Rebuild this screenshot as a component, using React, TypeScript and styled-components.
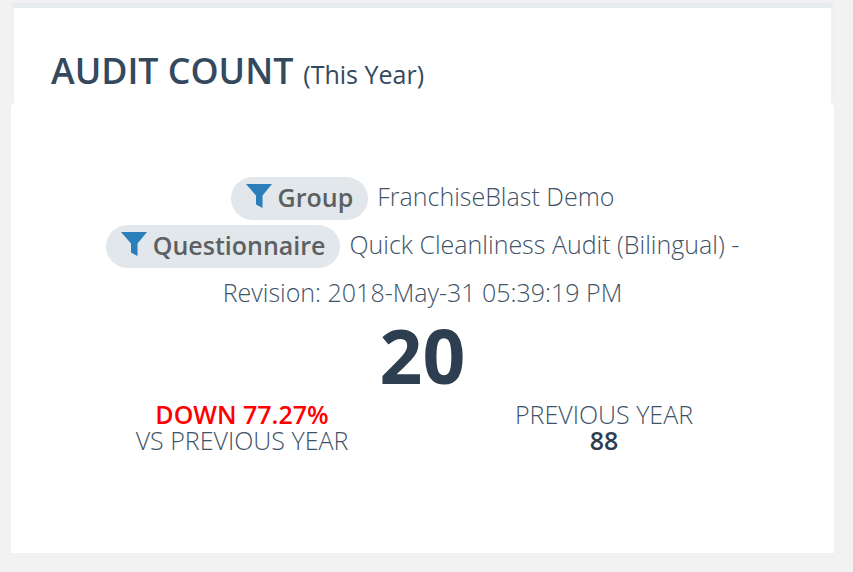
import React from "react";
import styled, { createGlobalStyle } from "styled-components";

const Global = createGlobalStyle`
  html, body { margin: 0; padding: 0; background: #f2f2f2; }
  body { font-family: "Open Sans", "Liberation Sans", sans-serif; }
`;
const Page = styled.div`
  width: 853px;
  height: 572px;
  box-sizing: border-box;
  padding: 3px 19px 0 11px;
  overflow: hidden;
`;
const Header = styled.header`
  height: 99px;
  box-sizing: border-box;
  background: #fff;
  border-top: 5px solid #e7ecef;
  border-left: 3px solid #f0f0f0;
  border-right: 3px solid #f0f0f0;
  padding: 38px 37px 0;
  display: flex;
  align-items: baseline;
  gap: 10px;
  color: #2c3e50;
`;
const Title = styled.h1`
  margin: 0;
  font-size: 35.75px;
  line-height: 48px;
  font-weight: 600;
  color: #34495e;
`;
const Sub = styled.span`
  font-size: 25px;
  font-weight: 400;
  color: #34495e;
`;
const Body = styled.section`
  height: 451px;
  box-sizing: border-box;
  background: #fff;
  border-radius: 6px 6px 0 0;
  padding-top: 70px;
  display: flex;
  flex-direction: column;
  align-items: center;
  color: #3f5368;
`;
const FilterRow = styled.div`
  width: 680px;
  text-align: center;
  font-size: 25px;
  font-weight: 300;
  line-height: 48px;
`;
const Chip = styled.span`
  display: inline-flex;
  align-items: center;
  height: 43px;
  padding: 0 15px;
  margin: -3px 9px -3px 0;
  border-radius: 22px;
  background: #e1e7ea;
  color: #5d5f62;
  font-weight: 600;
  vertical-align: middle;
  gap: 6px;
  position: relative;
  top: -1px;
`;
const ChipLabel = styled.span`
  line-height: 42px;
  margin-bottom: 2px;
`;
const Funnel = styled.svg`
  width: 26px;
  height: 26px;
  fill: #2a7fba;
  flex: none;
  margin-bottom: 4px;
`;
const Total = styled.div`
  font-size: 75px;
  line-height: 78px;
  font-weight: 700;
  color: #2c3e50;
`;
const Compare = styled.div`
  width: 100%;
  margin-top: 7px;
  display: grid;
  grid-template-columns: 462px 262px;
`;
const Stat = styled.div`
  text-align: center;
  font-size: 25px;
  line-height: 26px;
  font-weight: 300;
`;
const Down = styled.div`
  color: #ff0000;
  font-weight: 600;
`;
const Prev = styled.div`
  color: #2c3e50;
  font-weight: 600;
`;

const Icon = () => (
  <Funnel viewBox="0 0 26 26">
    <path d="M0 1h26L16.5 12.5V25l-6.5-3.5v-9z" />
  </Funnel>
);

export default function App() {
  return (
    <Page>
      <Global />
      <Header>
        <Title>AUDIT COUNT</Title>
        <Sub>(This Year)</Sub>
      </Header>
      <Body>
        <FilterRow>
          <Chip><Icon /><ChipLabel>Group</ChipLabel></Chip>FranchiseBlast Demo
        </FilterRow>
        <FilterRow>
          <Chip><Icon /><ChipLabel>Questionnaire</ChipLabel></Chip>Quick Cleanliness Audit (Bilingual) - Revision: 2018-May-31 05:39:19 PM
        </FilterRow>
        <Total>20</Total>
        <Compare>
          <Stat>
            <Down>DOWN 77.27%</Down>
            VS PREVIOUS YEAR
          </Stat>
          <Stat>
            PREVIOUS YEAR
            <Prev>88</Prev>
          </Stat>
        </Compare>
      </Body>
    </Page>
  );
}
